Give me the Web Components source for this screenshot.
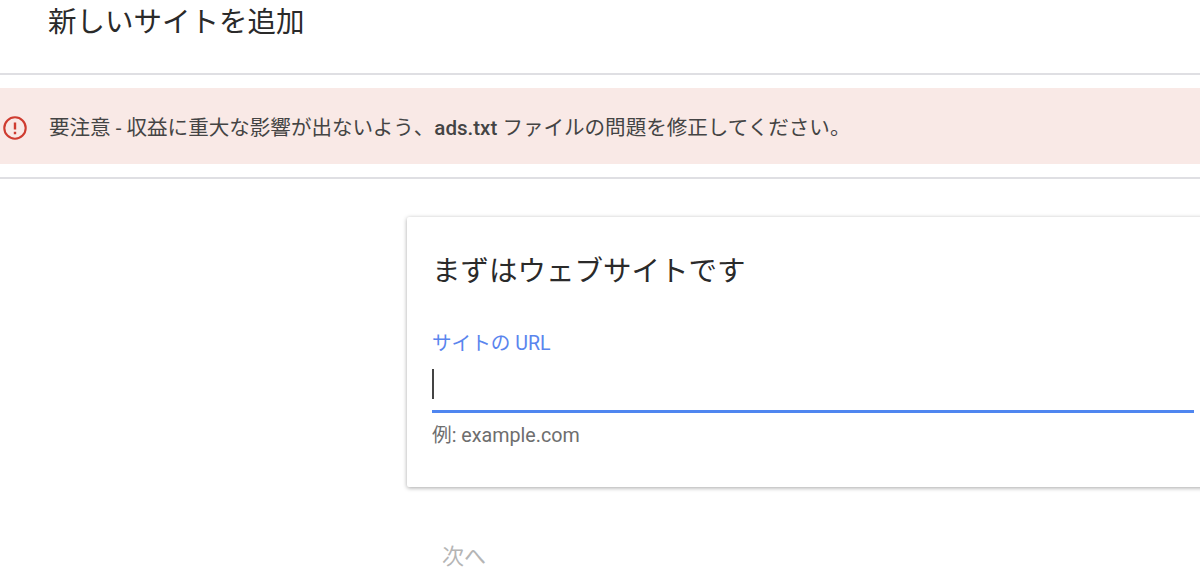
<!DOCTYPE html>
<html lang="ja"><head><meta charset="utf-8">
<style>
html,body{margin:0;padding:0;height:572px;overflow:hidden;background:#fff;font-family:Roboto,"Noto Sans CJK JP",sans-serif}
</style></head><body>
<site-page>
<page-title>新しいサイトを追加</page-title>
<alert-bar>要注意 - 収益に重大な影響が出ないよう、<b>ads.txt</b> ファイルの問題を修正してください。</alert-bar>
<url-card heading="まずはウェブサイトです" label="サイトの URL" hint="例: example.com"></url-card>
<next-button>次へ</next-button>
</site-page>
<script>
function def(name,html){customElements.define(name,class extends HTMLElement{constructor(){super();this.attachShadow({mode:'open'}).innerHTML=html}})}
def('site-page',`<style>:host{display:flex;flex-direction:column;width:1200px;height:572px;overflow:hidden}</style><slot></slot>`);
def('page-title',`<style>:host{display:block;box-sizing:border-box;height:75px;padding:3px 0 0 48px;border-bottom:2px solid #dfdfe3;font-size:28.5px;line-height:40px;color:#2a2a2a}</style><slot></slot>`);
def('alert-bar',`<style>:host{display:block;box-sizing:border-box;height:104px;padding:13px 0 13px;border-bottom:2px solid #dfdfe3}
.w{display:flex;align-items:center;gap:20px;height:76px;padding-left:3px;background:#f9e9e6;font-size:20.55px;color:#444}
svg{width:26px;height:26px;flex:none;margin-top:3px}
::slotted(b){font-weight:500}
</style><div class="w"><svg viewBox="0 0 26 26"><circle cx="12" cy="13" r="10.7" fill="none" stroke="#cf3c30" stroke-width="2.1"/><path d="M12 7.4v7.2M12 16.8v2.4" stroke="#cf3c30" stroke-width="2.4" fill="none"/></svg><span><slot></slot></span></div>`);
customElements.define('url-card',class extends HTMLElement{constructor(){super();this.attachShadow({mode:'open'})}
connectedCallback(){this.shadowRoot.innerHTML=`<style>
:host{display:block;box-sizing:border-box;width:820px;height:270px;margin:38px 0 0 407px;padding:36px 0 0 25px;background:#fff;border-radius:2px;box-shadow:0 1px 4px rgba(0,0,0,.35)}
h2{margin:0;font-size:28.5px;font-weight:400;line-height:38px;color:#2a2a2a}
.l{margin-top:41px;font-size:19.6px;line-height:24px;color:#5a85ee}
.i{width:762px;height:44px;margin-top:10px;border-bottom:3px solid #4f86f0;display:flex;align-items:flex-start}
.c{width:1.5px;height:30px;margin-top:3px;background:#444}
.h{margin-top:11px;font-size:19.7px;line-height:24px;color:#6e6e6e}
</style><h2>${this.getAttribute('heading')}</h2><div class="l">${this.getAttribute('label')}</div><div class="i"><div class="c"></div></div><div class="h">${this.getAttribute('hint')}</div>`}});
def('next-button',`<style>:host{display:block;margin:55px 0 0 442px;font-size:22px;line-height:30px;color:#b5b5b5}</style><slot></slot>`);
</script>
</body></html>
